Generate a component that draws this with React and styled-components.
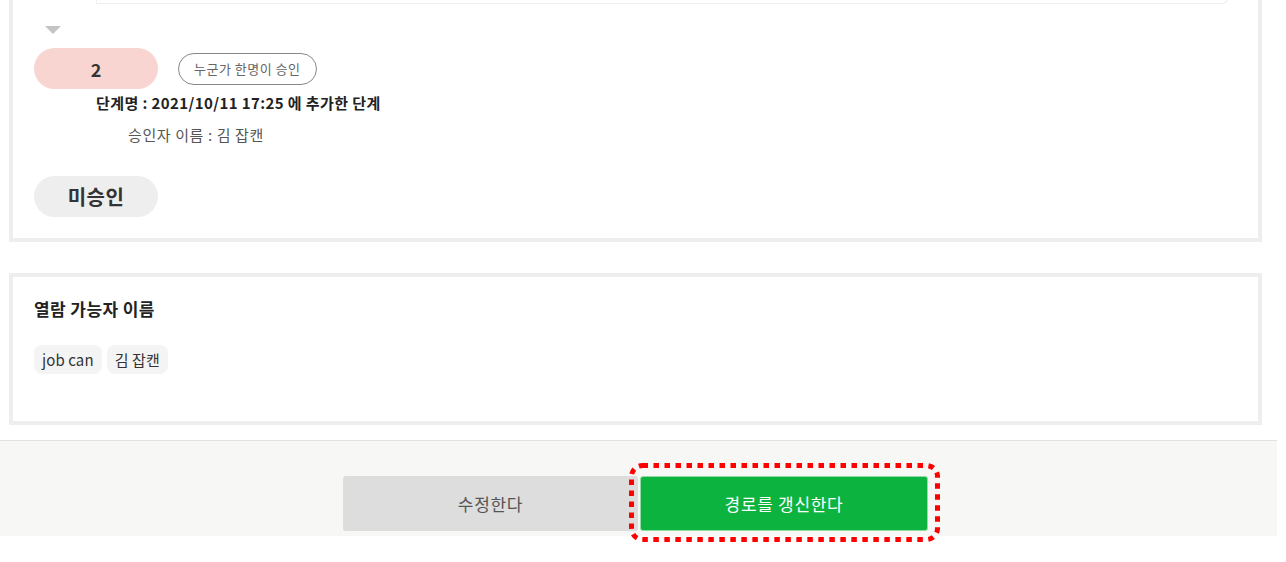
import React from "react";
import styled, { createGlobalStyle } from "styled-components";

const Global = createGlobalStyle`
  html, body { margin: 0; padding: 0; background: #fff; }
  body {
    font-family: "Noto Sans CJK KR", "Noto Sans", sans-serif;
    color: #333;
    overflow: hidden;
  }
`;

const Page = styled.div`
  width: 1286px;
  height: 562px;
  overflow: hidden;
  display: flex;
  flex-direction: column;
`;

const Card = styled.section`
  box-sizing: border-box;
  margin: ${(p) => p.$mt}px 24px 0 9px;
  width: 1253px;
  border: 4px solid #eeeeee;
  background: #fff;
  padding: ${(p) => p.$pad};
  display: flex;
  flex-direction: column;
`;

const PrevBox = styled.div`
  height: 60px;
  margin: 0 9px 0 62px;
  border: 1px solid #f0f0f0;
  border-top: none;
  border-radius: 0 0 6px 0;
`;

const Arrow = styled.div`
  width: 0;
  height: 0;
  margin: 22px 0 0 11px;
  border-left: 8px solid transparent;
  border-right: 8px solid transparent;
  border-top: 8px solid #c4c4c4;
`;

const StepRow = styled.div`
  display: flex;
  align-items: center;
  gap: 20px;
  margin-top: 14px;
`;

const Pill = styled.div`
  width: 124px;
  height: 41px;
  border-radius: 21px;
  background: ${(p) => p.$bg};
  display: flex;
  align-items: center;
  justify-content: center;
  font-size: ${(p) => p.$fs || 18}px;
  letter-spacing: ${(p) => p.$ls || 0}px;
  font-weight: 700;
  color: #333;
  margin-top: ${(p) => p.$mt || 0}px;
`;

const RuleTag = styled.div`
  box-sizing: border-box;
  height: 32px;
  padding: 0 15px;
  border: 1px solid #888;
  border-radius: 16px;
  display: flex;
  align-items: center;
  font-size: 13px;
  letter-spacing: 0.5px;
  color: #666;
`;

const StepTitle = styled.div`
  margin: 3px 0 0 62px;
  font-size: 15px;
  letter-spacing: 0.4px;
  font-weight: 700;
  color: #222;
  line-height: 22px;
`;

const Approver = styled.div`
  margin: 10px 0 0 94px;
  font-size: 15px;
  letter-spacing: 0.6px;
  color: #555;
  line-height: 22px;
`;

const SectionTitle = styled.div`
  font-size: 17px;
  letter-spacing: 0.4px;
  font-weight: 700;
  color: #222;
  line-height: 22px;
`;

const TagList = styled.div`
  display: flex;
  gap: 5px;
  margin-top: 25px;
`;

const NameTag = styled.span`
  height: 29px;
  padding: 0 8px;
  border-radius: 8px;
  background: #f4f4f4;
  display: flex;
  align-items: center;
  font-size: 15px;
  letter-spacing: 0.1px;
  color: #333;
`;

const Footer = styled.footer`
  box-sizing: border-box;
  width: 1277px;
  margin-top: 15px;
  border-top: 1px solid #e2e2e2;
  background: #f7f7f5;
  padding: 35px 0 5px 343px;
  display: flex;
  gap: 2px;
`;

const Button = styled.button`
  position: relative;
  box-sizing: border-box;
  width: ${(p) => p.$w}px;
  height: 55px;
  border: ${(p) => (p.$primary ? "1px solid #8fdca6" : "none")};
  border-radius: 3px;
  background: ${(p) => (p.$primary ? "#0db33f" : "#dddddd")};
  color: ${(p) => (p.$primary ? "#fff" : "#555")};
  font-family: inherit;
  font-size: 17px;
  letter-spacing: 0.7px;
  cursor: pointer;
  padding: 0;
`;

const Highlight = styled.svg`
  position: absolute;
  left: -12px;
  top: -14px;
  width: 311px;
  height: 79px;
  pointer-events: none;
  overflow: visible;
`;

export default function App() {
  return (
    <Page>
      <Global />
      <Card $mt={-61} $pad="0 21px 21px 21px">
        <PrevBox />
        <Arrow />
        <StepRow>
          <Pill $bg="#f8d5d1">2</Pill>
          <RuleTag>누군가 한명이 승인</RuleTag>
        </StepRow>
        <StepTitle>단계명 : 2021/10/11 17:25 에 추가한 단계</StepTitle>
        <Approver>승인자 이름 : 김 잡캔</Approver>
        <Pill $bg="#eeeeee" $mt={30} $fs={20} $ls={0.5}>미승인</Pill>
      </Card>
      <Card $mt={31} $pad="21px 21px 47px 21px">
        <SectionTitle>열람 가능자 이름</SectionTitle>
        <TagList>
          <NameTag>job can</NameTag>
          <NameTag>김 잡캔</NameTag>
        </TagList>
      </Card>
      <Footer>
        <Button $w={295}>수정한다</Button>
        <Button $w={288} $primary>
          경로를 갱신한다
          <Highlight viewBox="0 0 311 79">
            <rect
              x="2.5"
              y="2.5"
              width="306"
              height="74"
              rx="11"
              fill="none"
              stroke="#ff0000"
              strokeWidth="5"
              strokeDasharray="5.5 5.5"
            />
          </Highlight>
        </Button>
      </Footer>
    </Page>
  );
}
